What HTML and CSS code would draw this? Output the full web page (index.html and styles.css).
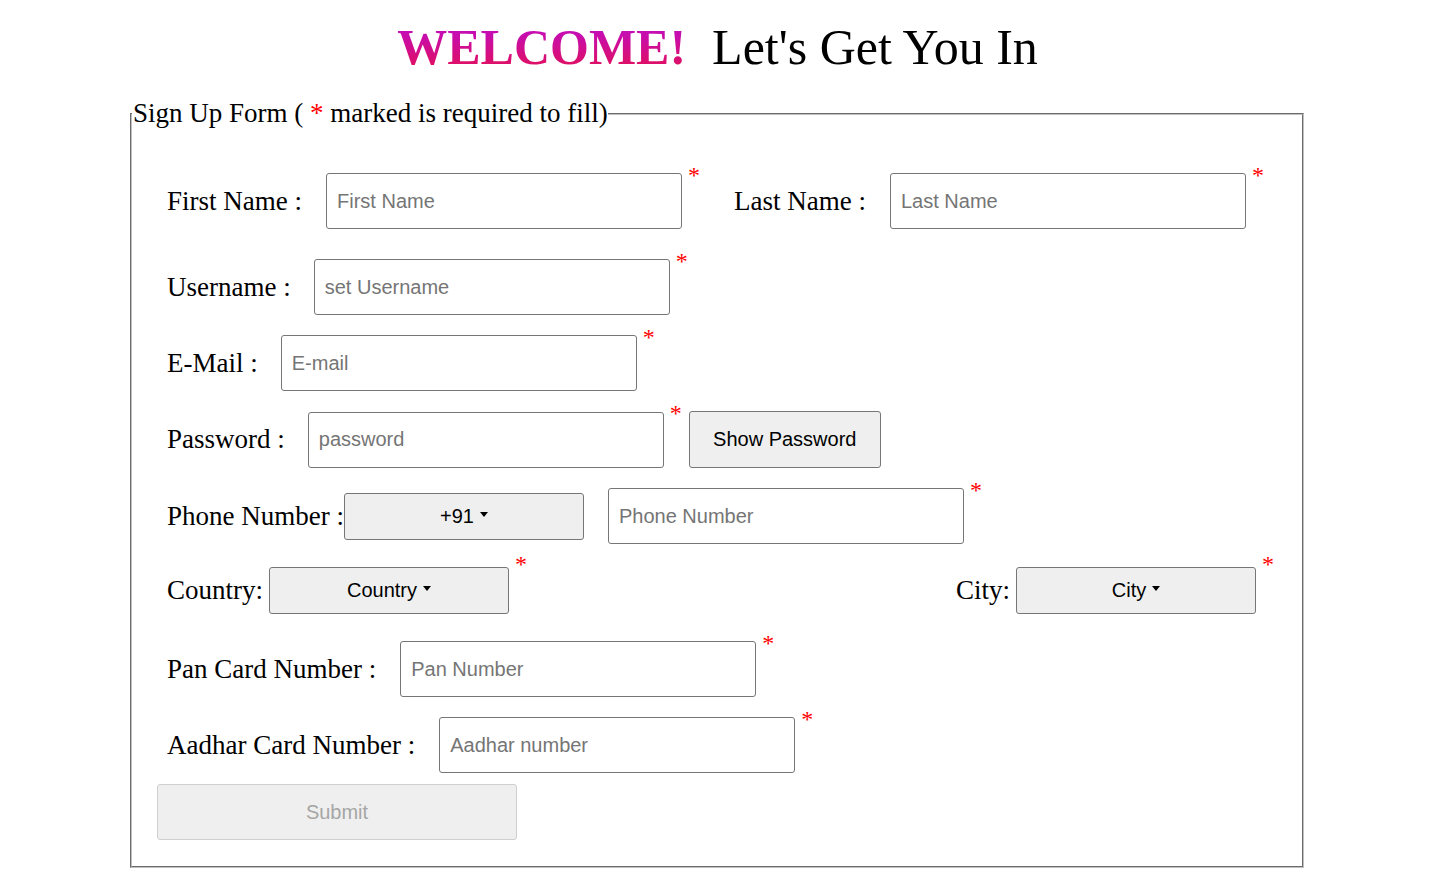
FILE: index.html
```html
<!DOCTYPE html>
<html lang="en">
<head>
<meta charset="utf-8">
<title>Sign Up</title>
<link rel="stylesheet" href="styles.css">
</head>
<body>
<h1 class="title"><span class="welcome">WELCOME!</span><span class="tagline">Let's Get You In</span></h1>
<form class="signup">
  <fieldset class="box">
    <legend class="box-legend">Sign Up Form ( <span class="req">*</span> marked is required to fill)</legend>
    <div class="fields">
      <div class="row row-first">
        <label class="lbl">First Name :</label><input class="field field-first" type="text" placeholder="First Name"><span class="star">*</span>
        <label class="lbl lbl-last">Last Name :</label><input class="field" type="text" placeholder="Last Name"><span class="star">*</span>
      </div>
      <div class="row">
        <label class="lbl">Username :</label><input class="field" type="text" placeholder="set Username"><span class="star">*</span>
      </div>
      <div class="row">
        <label class="lbl">E-Mail :</label><input class="field" type="email" placeholder="E-mail"><span class="star">*</span>
      </div>
      <div class="row row-pass">
        <label class="lbl">Password :</label><input class="field" type="password" placeholder="password"><span class="star">*</span>
        <button class="btn btn-show" type="button">Show Password</button>
      </div>
      <div class="row row-phone">
        <label class="lbl lbl-tight">Phone Number :</label><button class="btn btn-drop" type="button">+91<span class="caret"></span></button>
        <input class="field field-phone" type="tel" placeholder="Phone Number"><span class="star">*</span>
      </div>
      <div class="row row-place">
        <label class="lbl lbl-short">Country:</label><button class="btn btn-drop" type="button">Country<span class="caret"></span></button><span class="star">*</span>
        <label class="lbl lbl-short lbl-city">City:</label><button class="btn btn-drop" type="button">City<span class="caret"></span></button><span class="star">*</span>
      </div>
      <div class="row">
        <label class="lbl">Pan Card Number :</label><input class="field field-wide-gap" type="text" placeholder="Pan Number"><span class="star">*</span>
      </div>
      <div class="row">
        <label class="lbl">Aadhar Card Number :</label><input class="field field-wide-gap" type="text" placeholder="Aadhar number"><span class="star">*</span>
      </div>
    </div>
    <div class="actions">
      <button class="btn btn-submit" type="submit" disabled>Submit</button>
    </div>
  </fieldset>
</form>
</body>
</html>
```

FILE: styles.css
```css
body {
  margin: 8px;
  font-family: "Liberation Serif", "Times New Roman", serif;
  color: #000;
  background: #fff;
}

.title {
  margin: 11px 0 0;
  padding-left: 6px;
  font-size: 50px;
  line-height: 56px;
  font-weight: normal;
  text-align: center;
}

.welcome {
  font-weight: bold;
  background: linear-gradient(to bottom, #bb0cd2, #e5104f);
  -webkit-background-clip: text;
  background-clip: text;
  color: transparent;
}

.tagline {
  margin-left: 26px;
}

.signup {
  margin: 23px 0 0 122px;
}

.box {
  box-sizing: border-box;
  width: 1174px;
  margin: 0;
  padding: 0 0 26px;
  border: 2px groove #c0c0c0;
  min-inline-size: 0;
}

.box-legend {
  padding: 0 0 0 1px;
  font-size: 27px;
  line-height: 31px;
}

.req {
  color: #ff0000;
}

.fields {
  padding: 44px 0 0 35px;
}

.row {
  display: flex;
  align-items: center;
  height: 56px;
  margin-bottom: 20px;
}

.row-first {
  margin-bottom: 30px;
}

.row-pass {
  height: 57px;
}

.row-phone {
  margin-bottom: 18px;
}

.row-place {
  margin-bottom: 23px;
}

.lbl {
  font-size: 27px;
  line-height: 31px;
  white-space: nowrap;
}

.lbl + .field {
  margin-left: 23px;
}

.lbl + .field-first,
.lbl + .field-wide-gap {
  margin-left: 24px;
}

.lbl-last {
  margin-left: 34px;
}

.lbl-last + .field {
  margin-left: 24px;
}

.lbl-short + .btn {
  margin-left: 6px;
}

.lbl-city {
  margin-left: 429px;
}

.field {
  box-sizing: border-box;
  width: 356px;
  height: 56px;
  padding: 0 10px;
  border: 1px solid #767676;
  border-radius: 3px;
  font-family: "Liberation Sans", Arial, sans-serif;
  font-size: 20px;
  color: #000;
  background: #fff;
}

.field::placeholder {
  color: #757575;
}

.field-phone {
  margin-left: 24px;
}

.star {
  align-self: flex-start;
  margin: -10px 0 0 6px;
  font-size: 24px;
  line-height: 1;
  color: #ff0000;
}

.btn {
  box-sizing: border-box;
  border: 1px solid #767676;
  border-radius: 3px;
  background: #efefef;
  font-family: "Liberation Sans", Arial, sans-serif;
  font-size: 20px;
  color: #000;
  padding: 0;
}

.btn-show {
  width: 192px;
  height: 57px;
  margin-left: 7px;
}

.btn-drop {
  width: 240px;
  height: 47px;
}

.caret {
  display: inline-block;
  margin-left: 6px;
  vertical-align: 0.3em;
  border-top: 5px solid #000;
  border-left: 4px solid transparent;
  border-right: 4px solid transparent;
}

.actions {
  padding: 0 0 0 25px;
  margin-top: -9px;
}

.btn-submit {
  width: 360px;
  height: 56px;
  border-color: #cfcfcf;
  color: #a6a6a6;
  background: #efefef;
}
```
